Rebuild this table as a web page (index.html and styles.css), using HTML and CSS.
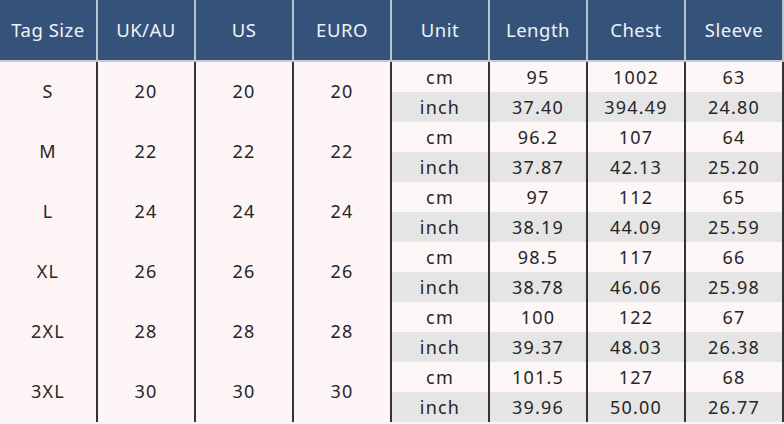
FILE: index.html
```html
<!DOCTYPE html>
<html>
<head>
<meta charset="utf-8">
<link rel="stylesheet" href="styles.css">
</head>
<body>
<div class="chart">
  <div class="th">Tag Size</div>
  <div class="th">UK/AU</div>
  <div class="th">US</div>
  <div class="th">EURO</div>
  <div class="th">Unit</div>
  <div class="th">Length</div>
  <div class="th">Chest</div>
  <div class="th">Sleeve</div>

  <div class="size">S</div><div class="size">20</div><div class="size">20</div><div class="size">20</div>
  <div class="cm">cm</div><div class="cm">95</div><div class="cm">1002</div><div class="cm">63</div>
  <div class="in">inch</div><div class="in">37.40</div><div class="in">394.49</div><div class="in">24.80</div>

  <div class="size">M</div><div class="size">22</div><div class="size">22</div><div class="size">22</div>
  <div class="cm">cm</div><div class="cm">96.2</div><div class="cm">107</div><div class="cm">64</div>
  <div class="in">inch</div><div class="in">37.87</div><div class="in">42.13</div><div class="in">25.20</div>

  <div class="size">L</div><div class="size">24</div><div class="size">24</div><div class="size">24</div>
  <div class="cm">cm</div><div class="cm">97</div><div class="cm">112</div><div class="cm">65</div>
  <div class="in">inch</div><div class="in">38.19</div><div class="in">44.09</div><div class="in">25.59</div>

  <div class="size">XL</div><div class="size">26</div><div class="size">26</div><div class="size">26</div>
  <div class="cm">cm</div><div class="cm">98.5</div><div class="cm">117</div><div class="cm">66</div>
  <div class="in">inch</div><div class="in">38.78</div><div class="in">46.06</div><div class="in">25.98</div>

  <div class="size">2XL</div><div class="size">28</div><div class="size">28</div><div class="size">28</div>
  <div class="cm">cm</div><div class="cm">100</div><div class="cm">122</div><div class="cm">67</div>
  <div class="in">inch</div><div class="in">39.37</div><div class="in">48.03</div><div class="in">26.38</div>

  <div class="size">3XL</div><div class="size">30</div><div class="size">30</div><div class="size">30</div>
  <div class="cm">cm</div><div class="cm">101.5</div><div class="cm">127</div><div class="cm">68</div>
  <div class="in">inch</div><div class="in">39.96</div><div class="in">50.00</div><div class="in">26.77</div>
</div>
</body>
</html>
```

FILE: styles.css
```css
html, body {
  margin: 0;
  padding: 0;
  background: #fdf6f6;
}

.chart {
  display: grid;
  grid-template-columns: repeat(8, 98px);
  grid-template-rows: 62px repeat(12, 30px);
  grid-auto-flow: row dense;
  font-family: "Noto Sans", "Open Sans", sans-serif;
  font-size: 18px;
  letter-spacing: 1.2px;
  color: #262626;
}

.chart > div {
  box-sizing: border-box;
  display: flex;
  align-items: center;
  justify-content: center;
  border-right: 2px solid #333333;
}

.th {
  background: #35527a;
  color: #eef2f7;
  border-right-color: #b9c4d2 !important;
  border-bottom: 2px solid #c3ccd8;
  font-size: 18.5px;
  letter-spacing: 0.5px;
  padding-bottom: 2px;
}

.size {
  grid-row: span 2;
  background: #fdf5f5;
  padding-bottom: 3px;
}

.cm {
  background: #fdf6f6;
}

.in {
  background: #e5e5e5;
}
```
